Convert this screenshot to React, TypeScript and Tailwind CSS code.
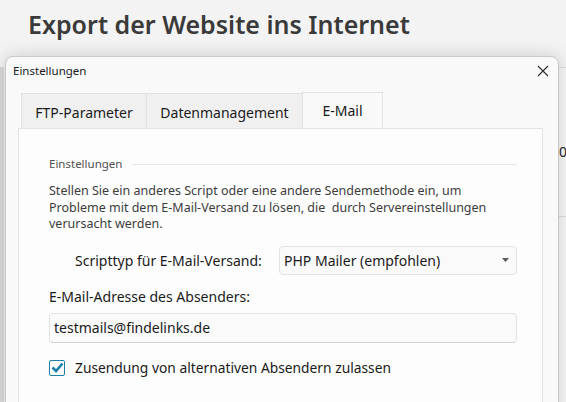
const font = { fontFamily: '"Noto Sans", "Open Sans", sans-serif' };

const rows = [31, 119, 17, 33, 11, 29, 10, 28, 28, 40];

const Check = () => (
  <span className="flex h-[16px] w-[16px] items-center justify-center rounded-[2px] border-[1.5px] border-[#1b7fa8] bg-white">
    <svg width="13" height="11" viewBox="0 0 13 11">
      <path d="M1.5 5.5 L5 9 L11.5 1.5" fill="none" stroke="#1b7fa8" strokeWidth="2.6" />
    </svg>
  </span>
);

const App = () => {
  const tabs = [
    { label: "FTP-Parameter", w: "w-[125px]" },
    { label: "Datenmanagement", w: "w-[156px]" },
  ];

  return (
    <div style={font} className="relative h-[402px] w-[566px] overflow-hidden bg-[#f3f3f3]">
      <h1 className="pl-[28px] pt-[6px] text-[25px] font-semibold leading-[36px] text-[#3a3a3a]">
        Export der Website ins Internet
      </h1>

      {/* page content behind the modal */}
      <div className="mt-[25px]">
        {rows.map((h, i) => (
          <div key={i} style={{ height: h }} className="grid grid-cols-[4px_555px_1fr]">
            <div className="bg-[#dadada]" />
            <div />
            <div
              className={`overflow-hidden border-b border-[#dcdcdc] bg-[#f6f6f6] pt-[44px] text-[14px] leading-[20px] text-[#222] ${
                i === 0 ? "border-t" : ""
              }`}
            >
              {i === 1 ? "0" : ""}
            </div>
          </div>
        ))}
      </div>

      {/* settings dialog */}
      <div className="absolute left-[5px] top-[56px] bottom-[-10px] flex w-[554px] flex-col rounded-t-[8px] border border-[#c8c8c8] bg-[#f9f9f9] shadow-[0_0_18px_rgba(0,0,0,0.16)]">
        <div className="flex h-[35px] items-start justify-between pl-[7px] pr-[9px] pt-[6px]">
          <span className="text-[11.5px] leading-[16px] text-[#1a1a1a]">Einstellungen</span>
          <svg width="12" height="12" viewBox="0 0 12 12" className="mt-[2px]">
            <path d="M1 1 L11 11 M11 1 L1 11" stroke="#2b2b2b" strokeWidth="1.1" />
          </svg>
        </div>

        <div className="ml-[15px] flex items-end">
          {tabs.map((t) => (
            <div
              key={t.label}
              className={`${t.w} flex h-[35px] items-center justify-center border-l border-t border-[#e2e2e2] bg-[#f0f0f0] pt-[3px] text-[14px] text-[#1a1a1a]`}
            >
              {t.label}
            </div>
          ))}
          <div className="flex h-[36px] w-[81px] items-center justify-center border-x border-t border-[#e2e2e2] bg-[#f9f9f9] text-[14px] text-[#1a1a1a]">
            E-Mail
          </div>
        </div>

        <div className="ml-[12px] flex w-[525px] flex-1 flex-col border border-[#e3e3e3] bg-[#fdfdfd] pl-[30px] pr-[25px] pt-[27px]">
          <div className="flex items-center gap-[10px]">
            <span className="text-[11.5px] leading-[16px] text-[#505050]">Einstellungen</span>
            <div className="h-px flex-1 bg-[#e6e6e6]" />
          </div>

          <p className="mt-[11px] text-[12.5px] leading-[16.5px] text-[#3c3c3c]">
            Stellen Sie ein anderes Script oder eine andere Sendemethode ein, um
            <br />
            Probleme mit dem E-Mail-Versand zu lösen, die&nbsp; durch Servereinstellungen
            <br />
            verursacht werden.
          </p>

          <div className="mt-[13px] flex items-center pl-[26px]">
            <span className="w-[204px] text-[14px] text-[#1a1a1a]">Scripttyp für E-Mail-Versand:</span>
            <div className="flex h-[29px] flex-1 items-center justify-between rounded-[4px] border border-[#e2e2e2] bg-[#fafafa] pl-[4px] pr-[7px]">
              <span className="text-[14px] text-[#1a1a1a]">PHP Mailer (empfohlen)</span>
              <svg width="7" height="4" viewBox="0 0 7 4">
                <path d="M0 0 H7 L3.5 4 Z" fill="#5a5a5a" />
              </svg>
            </div>
          </div>

          <div className="mt-[12px] text-[14px] leading-[20px] text-[#1a1a1a]">E-Mail-Adresse des Absenders:</div>

          <div className="mt-[6px] flex h-[30px] items-center rounded-[4px] border border-[#e2e2e2] border-b-[#d0d0d0] bg-[#fafafa] px-[4px] text-[14px] text-[#1a1a1a]">
            testmails@findelinks.de
          </div>

          <label className="mt-[15px] flex items-center gap-[10px] text-[13.8px] text-[#1a1a1a]">
            <Check />
            Zusendung von alternativen Absendern zulassen
          </label>
        </div>
      </div>
    </div>
  );
};

export default App;
